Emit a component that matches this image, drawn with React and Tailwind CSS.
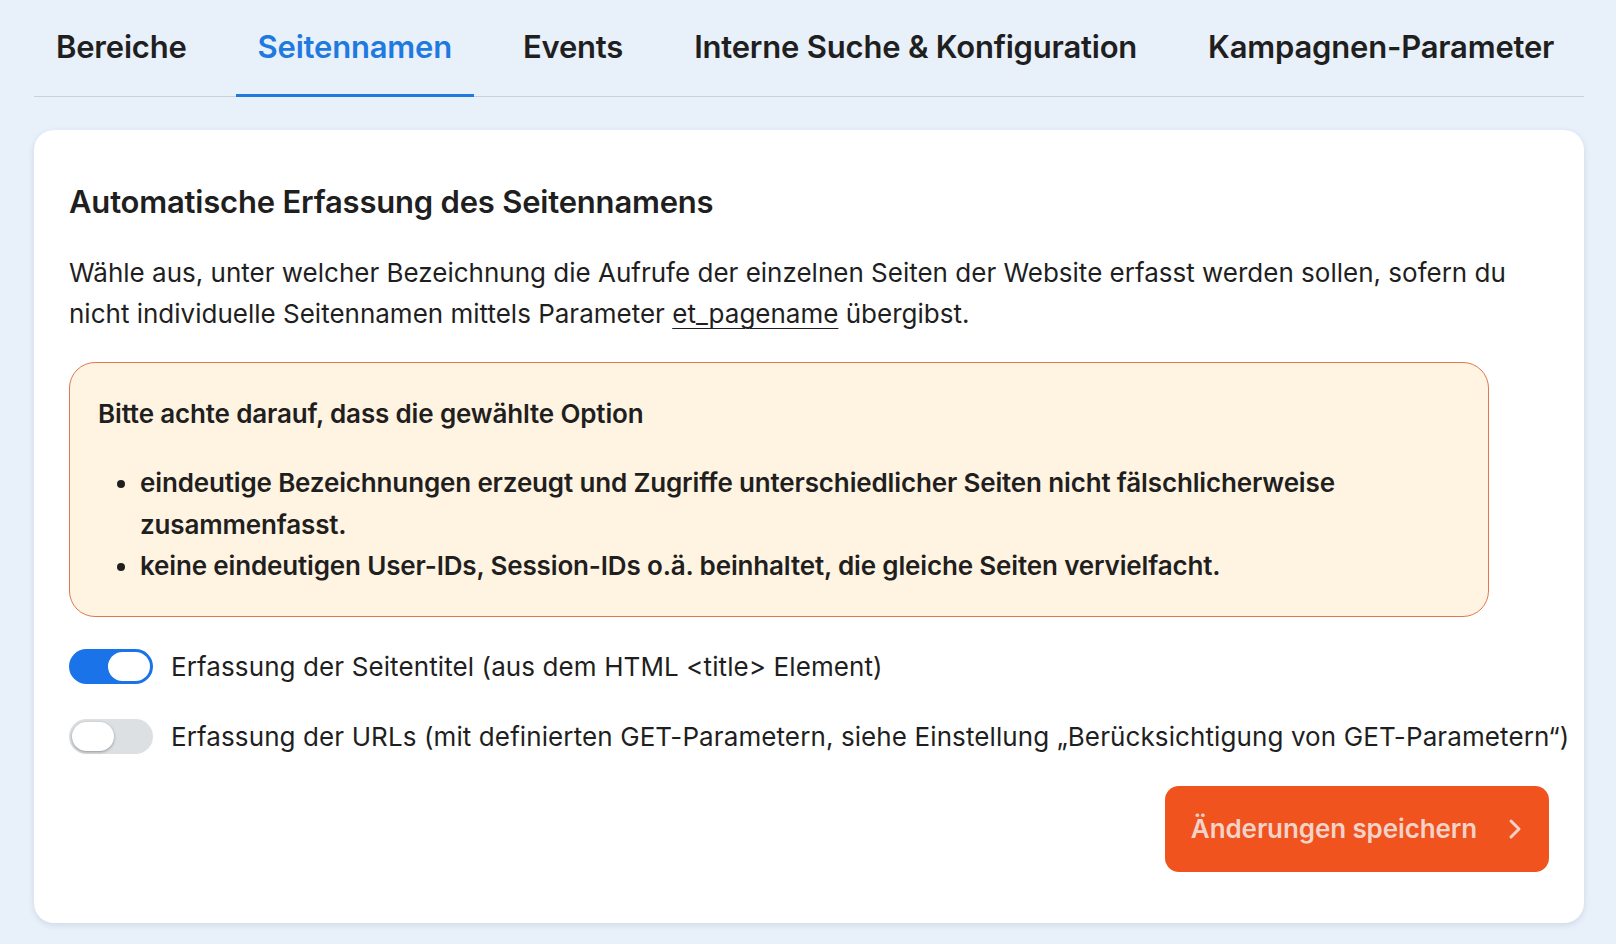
import React, { useState } from 'react';

const tabs = ['Bereiche', 'Seitennamen', 'Events', 'Interne Suche & Konfiguration', 'Kampagnen-Parameter'];

function Toggle({ on, onChange }) {
    return (
        <button
            type="button"
            onClick={onChange}
            className={`relative w-[84px] h-[35px] shrink-0 rounded-full transition-colors ${on ? 'bg-[#1a73e8]' : 'bg-[#dde0e3]'}`}
        >
            <span
                className={`absolute top-[3px] w-[42px] h-[29px] rounded-full bg-white ${on ? 'left-[39px]' : 'left-[3px] shadow-[0_1px_3px_rgba(0,0,0,0.35)]'}`}
            />
        </button>
    );
}

export default function App() {
    const [activeTab, setActiveTab] = useState('Seitennamen');
    const [useTitle, setUseTitle] = useState(true);
    const [useUrl, setUseUrl] = useState(false);

    return (
        <div className="min-h-[944px] bg-[#e8f0fa] pl-[34px] pr-[32px] pb-[23px] text-[#1f1f1f] font-['Inter',sans-serif]">
            <div className="flex gap-[27px] border-b border-[#c9d0d9]">
                {tabs.map((tab) => (
                    <button
                        key={tab}
                        onClick={() => setActiveTab(tab)}
                        className={`-mb-px px-[22px] pt-[29px] pb-[29px] text-[31px] leading-[36px] font-semibold tracking-[-0.2px] border-b-[3px] ${
                            activeTab === tab ? 'text-[#1f7ae0] border-[#1f7ae0]' : 'border-transparent'
                        }`}
                    >
                        {tab}
                    </button>
                ))}
            </div>

            <div className="mt-[33px] bg-white rounded-[20px] shadow-[0_2px_6px_rgba(30,50,80,0.12)] pt-[52px] pb-[51px] px-[35px]">
                <h2 className="text-[31px] leading-[40px] font-semibold tracking-[-0.2px]">
                    Automatische Erfassung des Seitennamens
                </h2>
                <p className="mt-[30px] text-[26px] leading-[41px]">
                    Wähle aus, unter welcher Bezeichnung die Aufrufe der einzelnen Seiten der Website erfasst werden sollen, sofern du
                    <br />
                    nicht individuelle Seitennamen mittels Parameter <span className="underline underline-offset-[5px] decoration-1">et_pagename</span> übergibst.
                </p>

                <div className="mt-[28px] w-[1420px] rounded-[26px] border-[1.5px] border-[#e0784c] bg-[#fff3e1] px-[28px] pt-[30px] pb-[29px] font-semibold text-[26px] tracking-[-0.15px]">
                    <p className="leading-[41px]">Bitte achte darauf, dass die gewählte Option</p>
                    <ul className="mt-[28px] list-disc pl-[42px] leading-[41.5px]">
                        <li>eindeutige Bezeichnungen erzeugt und Zugriffe unterschiedlicher Seiten nicht fälschlicherweise<br />zusammenfasst.</li>
                        <li>keine eindeutigen User-IDs, Session-IDs o.ä. beinhaltet, die gleiche Seiten vervielfacht.</li>
                    </ul>
                </div>

                <div className="mt-[29px] flex flex-col gap-[29px] text-[26px] leading-[41px] tracking-[0.1px]">
                    <label className="flex items-center gap-[18px]">
                        <Toggle on={useTitle} onChange={() => setUseTitle(!useTitle)} />
                        <span>Erfassung der Seitentitel (aus dem HTML &lt;title&gt; Element)</span>
                    </label>
                    <label className="flex items-center gap-[18px] whitespace-nowrap">
                        <Toggle on={useUrl} onChange={() => setUseUrl(!useUrl)} />
                        <span>Erfassung der URLs (mit definierten GET-Parametern, siehe Einstellung „Berücksichtigung von GET-Parametern“)</span>
                    </label>
                </div>

                <div className="mt-[29px] flex justify-end">
                    <button className="h-[86px] w-[384px] rounded-[14px] bg-[#f0531e] flex items-center justify-center gap-[30px] text-[26px] font-semibold text-[#f3d2c8] tracking-[-0.1px]">
                        Änderungen speichern
                        <svg width="16" height="24" viewBox="0 0 16 24" fill="none" stroke="currentColor" strokeWidth="3" strokeLinecap="round" strokeLinejoin="round">
                            <path d="M4 4l8 8-8 8" />
                        </svg>
                    </button>
                </div>
            </div>
        </div>
    );
}
